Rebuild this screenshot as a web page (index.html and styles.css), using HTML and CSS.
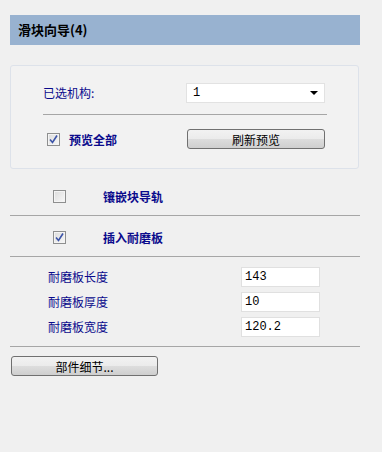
FILE: index.html
```html
<!DOCTYPE html>
<html lang="zh-CN">
<head>
    <meta charset="UTF-8">
    <title>滑块向导</title>
    <link rel="stylesheet" href="styles.css">
</head>
<body>
    <div class="panel">
        <div class="panel-title">滑块向导(4)</div>

        <div class="group-box">
            <div class="group-row">
                <span class="field-label">已选机构:</span>
                <div class="select-box">
                    <span>1</span>
                    <span class="select-arrow"></span>
                </div>
            </div>
            <div class="group-divider"></div>
            <div class="group-row">
                <div class="check-item">
                    <span class="checkbox checked">
                        <svg width="9" height="9" viewBox="0 0 9 9"><path d="M1 4.5 L3.5 7.5 L8 0.5" fill="none" stroke="#3c54a8" stroke-width="1.6"/></svg>
                    </span>
                    <span class="check-label">预览全部</span>
                </div>
                <button class="btn btn-preview">刷新预览</button>
            </div>
        </div>

        <div class="option-row first">
            <span class="checkbox"></span>
            <span class="check-label">镶嵌块导轨</span>
        </div>
        <div class="divider"></div>
        <div class="option-row">
            <span class="checkbox checked">
                <svg width="9" height="9" viewBox="0 0 9 9"><path d="M1 4.5 L3.5 7.5 L8 0.5" fill="none" stroke="#3c54a8" stroke-width="1.6"/></svg>
            </span>
            <span class="check-label">插入耐磨板</span>
        </div>
        <div class="divider"></div>

        <div class="params">
            <div class="param-row">
                <span class="field-label">耐磨板长度</span>
                <input class="param-input" type="text" value="143">
            </div>
            <div class="param-row">
                <span class="field-label">耐磨板厚度</span>
                <input class="param-input" type="text" value="10">
            </div>
            <div class="param-row">
                <span class="field-label">耐磨板宽度</span>
                <input class="param-input" type="text" value="120.2">
            </div>
        </div>
        <div class="divider"></div>

        <button class="btn btn-details">部件细节...</button>
    </div>
</body>
</html>
```

FILE: styles.css
```css
* {
    box-sizing: border-box;
    margin: 0;
    padding: 0;
}

body {
    background-color: #f0f0f0;
    font-family: "Noto Sans CJK SC", "Liberation Sans", sans-serif;
    font-size: 12px;
}

.panel {
    width: 350px;
    margin-left: 10px;
    padding-top: 15px;
}

.panel-title {
    height: 30px;
    line-height: 30px;
    padding-left: 8px;
    background-color: #98b2d0;
    color: #000;
    font-size: 13px;
    font-weight: bold;
}

.group-box {
    margin-top: 20px;
    width: 349px;
    height: 104px;
    border: 1px solid #dde2ea;
    border-radius: 3px;
    background-color: #f2f2f2;
    padding: 17px 32px 0 32px;
}

.group-row {
    display: flex;
    align-items: center;
    justify-content: space-between;
    height: 20px;
}

.group-row:last-child {
    padding-left: 4px;
    padding-right: 1px;
}

.group-divider {
    height: 1px;
    width: 284px;
    background-color: #a6a6a6;
    margin: 11px 0 14px;
}

.field-label {
    color: #0a0a8c;
    line-height: 20px;
}

.select-box {
    display: flex;
    align-items: center;
    justify-content: space-between;
    width: 139px;
    height: 20px;
    margin-right: 1px;
    padding: 0 6px 0 6px;
    background-color: #fff;
    border: 1px solid #e2e2e2;
    font-family: "Liberation Mono", monospace;
}

.select-arrow {
    width: 0;
    height: 0;
    border-left: 4px solid transparent;
    border-right: 4px solid transparent;
    border-top: 4px solid #000;
}

.check-item {
    display: flex;
    align-items: center;
    gap: 9px;
}

.checkbox {
    display: inline-flex;
    align-items: center;
    justify-content: center;
    width: 13px;
    height: 13px;
    border: 1px solid #8e8f8f;
    background: linear-gradient(135deg, #dcdcdc, #f8f8f8);
    box-shadow: inset 0 0 0 1px #f4f4f4;
}

.check-label {
    color: #0a0a8c;
    font-weight: bold;
    font-size: 12px;
}

.btn {
    height: 20px;
    border: 1px solid #707070;
    border-radius: 3px;
    background: linear-gradient(#f2f2f2 0%, #ebebeb 50%, #dddddd 51%, #cfcfcf 100%);
    font-family: "Noto Sans CJK SC", "Liberation Sans", sans-serif;
    font-size: 12px;
    color: #000;
}

.btn-preview {
    width: 138px;
}

.option-row {
    display: flex;
    align-items: center;
    height: 13px;
    padding-left: 43px;
    margin-top: 15px;
    margin-bottom: 12px;
}

.option-row.first {
    margin-top: 21px;
}

.option-row .check-label {
    margin-left: 37px;
}

.divider {
    height: 1px;
    background-color: #a6a6a6;
}

.params {
    padding: 10px 40px 9px 38px;
}

.param-row {
    display: flex;
    align-items: center;
    justify-content: space-between;
    height: 20px;
    margin-bottom: 5px;
}

.param-row:last-child {
    margin-bottom: 0;
}

.param-input {
    width: 79px;
    height: 20px;
    border: 1px solid #e0e0e0;
    background-color: #fff;
    padding-left: 3px;
    font-family: "Liberation Mono", monospace;
    font-size: 12px;
    color: #000;
}

.btn-details {
    margin-top: 9px;
    margin-left: 1px;
    width: 147px;
}
```
